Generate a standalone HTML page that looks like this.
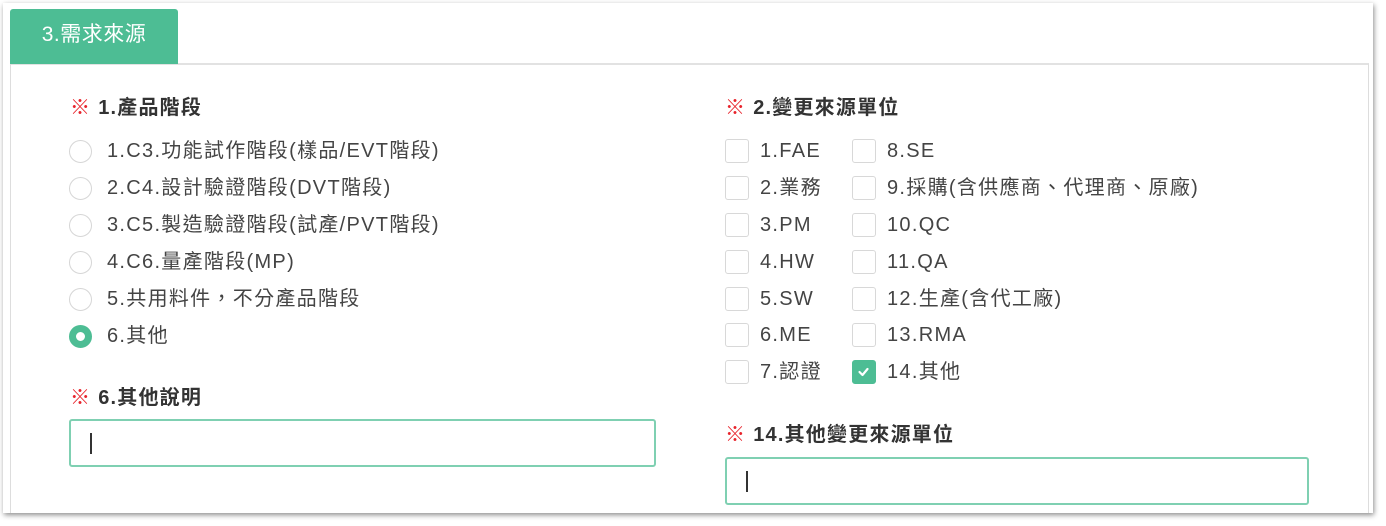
<!DOCTYPE html>
<html><head><meta charset="utf-8"><style>
body{margin:0;width:1386px;height:526px;background:#fff;position:relative;overflow:hidden;font-family:"Liberation Sans","Noto Sans CJK TC",sans-serif;color:#444}
.frame{position:absolute;left:3px;top:3px;width:1370px;height:510px;background:#fff;box-shadow:1px 2px 5px rgba(0,0,0,.45);overflow:hidden}
.tab{position:absolute;left:10px;top:9px;width:168px;height:55px;background:#4dbd94;border-radius:3px 3px 0 0;color:#fff;font-size:21px;line-height:52px;text-align:center;letter-spacing:.5px}
.panel{position:absolute;left:7px;top:60px;width:1357px;height:470px;border:1px solid #ddd;border-top:2px solid #e2e2e2}
.a{position:absolute;white-space:nowrap}
.h{font-size:20px;font-weight:bold;color:#333;letter-spacing:1.2px}
.h b{color:#e8232b;font-weight:normal;margin-right:7px}
.t{font-size:20px;color:#444;line-height:22px;letter-spacing:1.3px}
.r{position:absolute;width:23px;height:23px;border:1.5px solid #d6d6d6;border-radius:50%;box-sizing:border-box}
.rs{border:7px solid #4dbd94}
.c{position:absolute;width:24px;height:24px;border:1.5px solid #d8d8d8;border-radius:3px;box-sizing:border-box}
.cs{background:#4dbd94;border-color:#4dbd94}
.in{position:absolute;border:2px solid #7fd0b2;border-radius:3px;box-sizing:border-box;height:48px}
.in i{position:absolute;left:19px;top:12px;width:2px;height:21px;background:#333}
</style></head><body>
<div class="frame"><div class="panel"></div></div>
<div class="tab">3.需求來源</div>

<div class="a h" style="left:70px;top:91px"><b>※</b>1.產品階段</div>
<div class="r" style="left:69px;top:140px"></div><div class="a t" style="left:107px;top:140px">1.C3.功能試作階段(樣品/EVT階段)</div>
<div class="r" style="left:69px;top:177px"></div><div class="a t" style="left:107px;top:177px">2.C4.設計驗證階段(DVT階段)</div>
<div class="r" style="left:69px;top:214px"></div><div class="a t" style="left:107px;top:214px">3.C5.製造驗證階段(試產/PVT階段)</div>
<div class="r" style="left:69px;top:251px"></div><div class="a t" style="left:107px;top:251px">4.C6.量產階段(MP)</div>
<div class="r" style="left:69px;top:288px"></div><div class="a t" style="left:107px;top:288px">5.共用料件，不分產品階段</div>
<div class="r rs" style="left:69px;top:325px"></div><div class="a t" style="left:107px;top:325px">6.其他</div>

<div class="a h" style="left:70px;top:381px"><b>※</b>6.其他說明</div>
<div class="in" style="left:69px;top:419px;width:587px"><i></i></div>

<div class="a h" style="left:725px;top:91px"><b>※</b>2.變更來源單位</div>
<div class="c" style="left:725px;top:139px"></div><div class="a t" style="left:760px;top:140px">1.FAE</div>
<div class="c" style="left:852px;top:139px"></div><div class="a t" style="left:887px;top:140px">8.SE</div>
<div class="c" style="left:725px;top:176px"></div><div class="a t" style="left:760px;top:177px">2.業務</div>
<div class="c" style="left:852px;top:176px"></div><div class="a t" style="left:887px;top:177px">9.採購(含供應商、代理商、原廠)</div>
<div class="c" style="left:725px;top:213px"></div><div class="a t" style="left:760px;top:214px">3.PM</div>
<div class="c" style="left:852px;top:213px"></div><div class="a t" style="left:887px;top:214px">10.QC</div>
<div class="c" style="left:725px;top:250px"></div><div class="a t" style="left:760px;top:251px">4.HW</div>
<div class="c" style="left:852px;top:250px"></div><div class="a t" style="left:887px;top:251px">11.QA</div>
<div class="c" style="left:725px;top:287px"></div><div class="a t" style="left:760px;top:288px">5.SW</div>
<div class="c" style="left:852px;top:287px"></div><div class="a t" style="left:887px;top:288px">12.生產(含代工廠)</div>
<div class="c" style="left:725px;top:323px"></div><div class="a t" style="left:760px;top:324px">6.ME</div>
<div class="c" style="left:852px;top:323px"></div><div class="a t" style="left:887px;top:324px">13.RMA</div>
<div class="c" style="left:725px;top:360px"></div><div class="a t" style="left:760px;top:361px">7.認證</div>
<div class="c cs" style="left:852px;top:360px"><svg width="21" height="21" viewBox="0 0 21 21" style="position:absolute;left:0;top:0"><path d="M6.5 11l3 3 5-6" fill="none" stroke="#fff" stroke-width="2.2" stroke-linecap="round" stroke-linejoin="round"/></svg></div><div class="a t" style="left:887px;top:361px">14.其他</div>

<div class="a h" style="left:725px;top:418px"><b>※</b>14.其他變更來源單位</div>
<div class="in" style="left:725px;top:457px;width:584px"><i></i></div>
</body></html>
